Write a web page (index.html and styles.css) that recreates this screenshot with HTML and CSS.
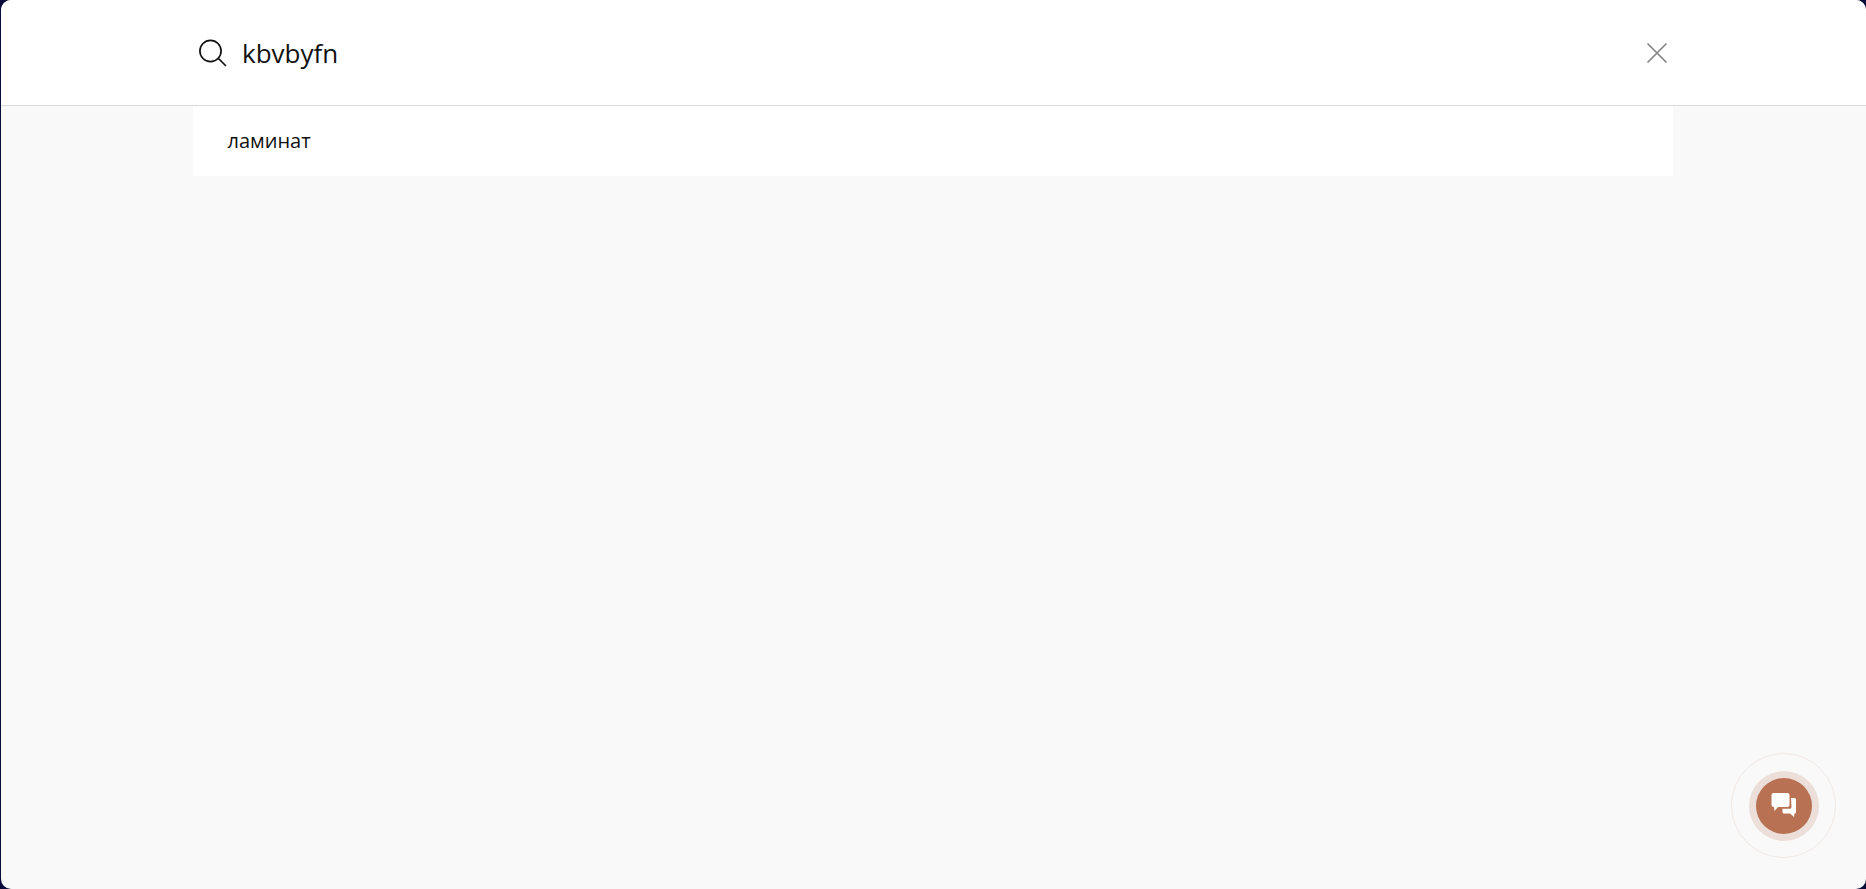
FILE: index.html
```html
<!DOCTYPE html>
<html lang="ru">
<head>
<meta charset="utf-8">
<title>Поиск</title>
<link rel="stylesheet" href="styles.css">
</head>
<body>
<div class="modal">
  <header class="search-bar">
    <div class="search-inner">
      <svg class="icon-search" width="30" height="30" viewBox="0 0 30 30" fill="none" stroke="#111" stroke-width="1.7" stroke-linecap="round"><circle cx="13.5" cy="13" r="10.6"/><path d="M21.5 20.5l7 7"/></svg>
      <span class="query">kbvbyfn</span>
      <svg class="icon-close" width="22" height="22" viewBox="0 0 22 22" fill="none" stroke="#858585" stroke-width="1.7"><path d="M1.5 1.5l19 19M20.5 1.5l-19 19"/></svg>
    </div>
  </header>
  <main class="results">
    <div class="suggest">ламинат</div>
  </main>
</div>
<div class="chat-ring">
  <div class="chat-halo">
    <button class="chat-btn" aria-label="Чат">
      <svg width="26" height="26" viewBox="0 0 26 26" fill="#fff"><path d="M2.5 0h14a2 2 0 0 1 2 2v10a2 2 0 0 1-2 2H7l-3.5 4-.5-4h-.5a2 2 0 0 1-2-2V2a2 2 0 0 1 2-2z"/><path d="M20 5h3.5A1.500 1.500 0 0 1 25 6.500V19a1.500 1.500 0 0 1-1.500 1.500l-.5 3.500-4-3.500h-6a1.500 1.500 0 0 1-1.500-1.500v-3.200h6.500a2 2 0 0 0 2.500-2z"/></svg>
    </button>
  </div>
</div>
</body>
</html>
```
FILE: styles.css
```css
html, body {
  margin: 0;
  height: 100%;
}
body {
  background: #0b0b3a;
  overflow: hidden;
  font-family: "Open Sans", "Noto Sans", sans-serif;
  color: #111;
}
.modal {
  box-sizing: border-box;
  margin-left: 1px;
  height: 889px;
  border-radius: 10px;
  overflow: hidden;
  background: #f9f9f9;
  display: flex;
  flex-direction: column;
}
.search-bar {
  height: 105px;
  flex: none;
  background: #fff;
  border-bottom: 1px solid #d9d9d9;
  display: flex;
  justify-content: center;
}
.search-inner {
  width: 1480px;
  margin-left: -1px;
  display: flex;
  align-items: center;
  padding: 0 5px 0 4px;
  box-sizing: border-box;
}
.icon-search { flex: none; }
.query {
  margin-left: 15px;
  font-size: 26px;
  flex: 1;
}
.icon-close { flex: none; }
.results {
  width: 1480px;
  margin: 0 auto;
  transform: translateX(-1px);
}
.suggest {
  background: #fff;
  height: 70px;
  line-height: 70px;
  padding-left: 35px;
  font-size: 20px;
}
.chat-ring {
  position: absolute;
  left: 1731px;
  top: 753px;
  width: 105px;
  height: 105px;
  box-sizing: border-box;
  border: 1px solid #f1e9e5;
  border-radius: 50%;
  display: flex;
  align-items: center;
  justify-content: center;
}
.chat-halo {
  width: 70px;
  height: 70px;
  border-radius: 50%;
  background: #ecdfd9;
  display: flex;
  align-items: center;
  justify-content: center;
}
.chat-btn {
  width: 56px;
  height: 56px;
  border: 0;
  padding: 0;
  border-radius: 50%;
  background: #b87253;
  display: flex;
  align-items: center;
  justify-content: center;
}
```
